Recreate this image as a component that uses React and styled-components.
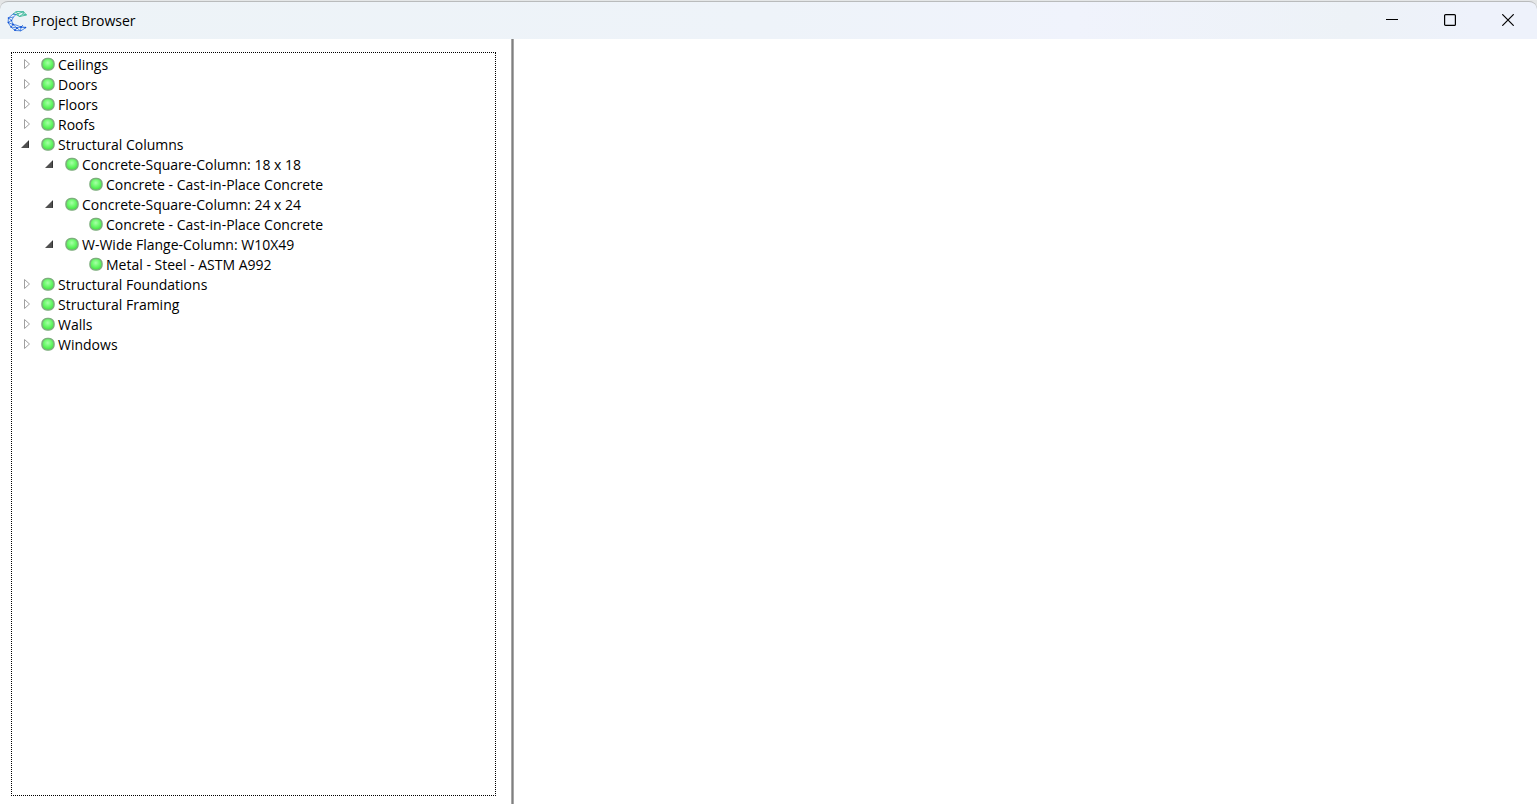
import React, { useState } from "react";
import styled, { createGlobalStyle } from "styled-components";

const GlobalStyle = createGlobalStyle`
  * {
    box-sizing: border-box;
  }
  body {
    margin: 0;
    background: #e4e6e7;
    font-family: "Open Sans", "Noto Sans", sans-serif;
    font-size: 14px;
    color: #000;
  }
`;

const Window = styled.div`
  display: flex;
  flex-direction: column;
  height: 100vh;
  padding-top: 1px;
`;

const TitleBar = styled.header`
  display: flex;
  align-items: center;
  height: 38px;
  flex-shrink: 0;
  padding-left: 7px;
  border-top: 1px solid #b9bbbc;
  border-radius: 8px 8px 0 0;
  background: linear-gradient(90deg, #edf3f7 0%, #eef3f9 50%, #f0f3fc 70%, #edf2f7 88%, #eef2fb 96%);
`;

const Title = styled.h1`
  flex: 1;
  margin: 0 0 0 5px;
  font-size: 14px;
  line-height: 20px;
  font-weight: 400;
`;

const WindowButton = styled.button`
  display: flex;
  align-items: center;
  justify-content: center;
  width: 58px;
  height: 36px;
  padding: 0 0 2px;
  border: none;
  background: none;
`;

const Content = styled.main`
  display: flex;
  flex: 1;
  min-height: 0;
  background: #fff;
`;

const SidePanel = styled.nav`
  display: flex;
  width: 511px;
  padding: 13px 15px 8px 11px;
`;

const TreeBox = styled.div`
  flex: 1;
  padding: 1px 0 0 8px;
  border: 1px dotted #000;
  overflow: auto;
`;

const Splitter = styled.div`
  width: 3px;
  background: #808080;
  border: solid #a8a8a8;
  border-width: 0 1px;
`;

const List = styled.ul`
  list-style: none;
  margin: 0;
  padding: 0 0 0 ${(props) => (props.$nested ? "24px" : "0")};
`;

const Row = styled.div`
  display: flex;
  align-items: center;
  height: 20px;
  white-space: nowrap;
`;

const Toggle = styled.button`
  display: flex;
  align-items: center;
  width: 21px;
  height: 20px;
  padding: 0;
  border: none;
  background: none;
`;

const Spacer = styled.span`
  width: 21px;
`;

const Label = styled.span`
  margin-left: 3px;
  padding-top: 2px;
  line-height: 20px;
`;

const tree = [
  { name: "Ceilings" },
  { name: "Doors" },
  { name: "Floors" },
  { name: "Roofs" },
  {
    name: "Structural Columns",
    children: [
      {
        name: "Concrete-Square-Column: 18 x 18",
        children: [{ name: "Concrete - Cast-in-Place Concrete", leaf: true }],
      },
      {
        name: "Concrete-Square-Column: 24 x 24",
        children: [{ name: "Concrete - Cast-in-Place Concrete", leaf: true }],
      },
      {
        name: "W-Wide Flange-Column: W10X49",
        children: [{ name: "Metal - Steel - ASTM A992", leaf: true }],
      },
    ],
  },
  { name: "Structural Foundations" },
  { name: "Structural Framing" },
  { name: "Walls" },
  { name: "Windows" },
];

const Logo = () => (
  <svg width="20" height="22" viewBox="0 0 20 22" fill="none" aria-hidden="true">
    <g stroke="#35b596" strokeWidth=".9">
      <path d="M6 4l3.500-2.500 7 .2 3 3.300-3.500-1L12.500 6.500 9 4.500zM9 1.500l3.500 5M9 4.500L16.500 1.700 16 4M12.500 6.500l7-1.500" />
    </g>
    <g stroke="#2f70dc" strokeWidth=".8">
      <path d="M6 4L1.500 8 1 12.500 4 17l4 3.500 6 .3 5-3.300-5-.5-4 1-4-3.500-1.500-4L6.500 7 9 4.500z" />
      <path d="M1.500 8l5-1M1.500 8l3 2.500L1 12.500l5 2L4 17l6 1-2 2.500M14 17l-.5 4-3.500-3M14 17l-5-2-3-.5M16 15l-2 2 5 .5" />
    </g>
    <g fill="#0f4fd4">
      <circle cx="1.500" cy="8" r=".8" />
      <circle cx="1.500" cy="12.500" r=".8" />
      <circle cx="4.500" cy="10.500" r=".8" />
      <circle cx="4" cy="17" r=".8" />
      <circle cx="8" cy="20" r=".9" />
      <circle cx="10" cy="18" r=".9" />
      <circle cx="14" cy="17" r=".9" />
      <circle cx="6" cy="14.500" r=".9" />
      <circle cx="18.500" cy="17.500" r=".8" />
    </g>
  </svg>
);

const Arrow = ({ open }) =>
  open ? (
    <svg width="10" height="10" viewBox="0 0 10 10" aria-hidden="true">
      <path d="M9 1v8H1z" fill="#505050" />
      <path d="M8.500 2v6.500" stroke="#333" />
    </svg>
  ) : (
    <svg width="12" height="12" viewBox="0 0 12 12" aria-hidden="true">
      <path d="M4.500 1.500v9l5-4.500z" fill="#fff" stroke="#a0a0a0" />
    </svg>
  );

const Status = () => (
  <svg width="14" height="14" viewBox="0 0 14 14" aria-hidden="true">
    <defs>
      <radialGradient id="status-fill" cx=".48" cy=".38" r=".62">
        <stop offset="0" stopColor="#a8ffa8" />
        <stop offset=".45" stopColor="#72fa72" />
        <stop offset="1" stopColor="#3fe23f" />
      </radialGradient>
    </defs>
    <rect x="1" y="1.500" width="12" height="11.500" rx="5" fill="url(#status-fill)" stroke="#7dae7d" strokeWidth="1.500" />
  </svg>
);

const TreeNode = ({ node }) => {
  const [open, setOpen] = useState(Boolean(node.children));
  return (
    <li>
      <Row>
        {node.leaf ? (
          <Spacer />
        ) : (
          <Toggle
            type="button"
            aria-label={`Toggle ${node.name}`}
            aria-expanded={open}
            onClick={() => setOpen(!open)}
          >
            <Arrow open={open} />
          </Toggle>
        )}
        <Status />
        <Label>{node.name}</Label>
      </Row>
      {open && node.children && (
        <List $nested>
          {node.children.map((child) => (
            <TreeNode key={child.name} node={child} />
          ))}
        </List>
      )}
    </li>
  );
};

const App = () => {
  return (
    <>
      <GlobalStyle />
      <Window>
        <TitleBar>
          <Logo />
          <Title>Project Browser</Title>
          <WindowButton type="button" aria-label="Minimize">
            <svg width="12" height="12" viewBox="0 0 12 12">
              <path d="M0 5.500h12" stroke="#000" />
            </svg>
          </WindowButton>
          <WindowButton type="button" aria-label="Maximize">
            <svg width="12" height="12" viewBox="0 0 12 12">
              <rect x=".6" y=".6" width="10.800" height="10.800" rx="1" fill="none" stroke="#000" strokeWidth="1.200" />
            </svg>
          </WindowButton>
          <WindowButton type="button" aria-label="Close">
            <svg width="12" height="12" viewBox="0 0 12 12">
              <path d="M.3.3l11.400 11.400M11.700.3L.3 11.700" stroke="#000" strokeWidth="1.200" />
            </svg>
          </WindowButton>
        </TitleBar>
        <Content>
          <SidePanel aria-label="Project tree">
            <TreeBox>
              <List>
                {tree.map((node) => (
                  <TreeNode key={node.name} node={node} />
                ))}
              </List>
            </TreeBox>
          </SidePanel>
          <Splitter />
        </Content>
      </Window>
    </>
  );
};

export default App;
